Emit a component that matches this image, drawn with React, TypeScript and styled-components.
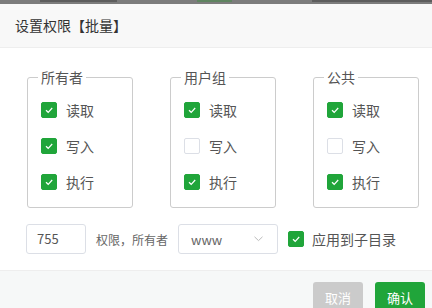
import styled, { createGlobalStyle } from 'styled-components';

const GlobalStyle = createGlobalStyle`
  html, body {
    margin: 0;
    padding: 0;
    background: #fff;
  }
  body {
    font-family: "Noto Sans CJK SC", "Noto Sans", sans-serif;
    color: #333;
  }
`;

type Perm = { label: string; checked: boolean };
type Group = { title: string; perms: Perm[] };

const groups: Group[] = [
  {
    title: '所有者',
    perms: [
      { label: '读取', checked: true },
      { label: '写入', checked: true },
      { label: '执行', checked: true },
    ],
  },
  {
    title: '用户组',
    perms: [
      { label: '读取', checked: true },
      { label: '写入', checked: false },
      { label: '执行', checked: true },
    ],
  },
  {
    title: '公共',
    perms: [
      { label: '读取', checked: true },
      { label: '写入', checked: false },
      { label: '执行', checked: true },
    ],
  },
];

const Check = ({ checked }: { checked: boolean }) => (
  <Box $checked={checked}>
    {checked && (
      <svg width="10" height="10" viewBox="0 0 10 10">
        <path d="M2 5.2 L4.2 7.3 L8.2 3" fill="none" stroke="#fff" strokeWidth="1.2" />
      </svg>
    )}
  </Box>
);

export default function App() {
  return (
    <>
      <GlobalStyle />
      <Backdrop>
        <BackText $w={110} />
        <BackText $w={50} $green />
        <BackText $w={170} />
      </Backdrop>
      <Dialog>
        <Header>设置权限【批量】</Header>
        <Body>
          <Groups>
            {groups.map((g) => (
              <Set key={g.title}>
                <Legend>{g.title}</Legend>
                {g.perms.map((p) => (
                  <Row key={p.label}>
                    <Check checked={p.checked} />
                    <Label>{p.label}</Label>
                  </Row>
                ))}
              </Set>
            ))}
          </Groups>
          <Controls>
            <Input>755</Input>
            <Caption>权限，所有者</Caption>
            <Select>
              <span>www</span>
              <svg width="9" height="6" viewBox="0 0 9 6">
                <path d="M0.5 0.8 L4.5 4.6 L8.5 0.8" fill="none" stroke="#bbb" strokeWidth="1" />
              </svg>
            </Select>
            <Check checked />
            <ApplyLabel>应用到子目录</ApplyLabel>
          </Controls>
        </Body>
        <Footer>
          <Button $variant="cancel">取消</Button>
          <Button $variant="ok">确认</Button>
        </Footer>
      </Dialog>
    </>
  );
}

const Backdrop = styled.div`
  height: 4px;
  background: #7c7c7c;
  overflow: hidden;
  display: flex;
  padding-left: 40px;
  gap: 80px;
`;

const BackText = styled.div<{ $w: number; $green?: boolean }>`
  width: ${(p) => p.$w}px;
  height: 2px;
  background: ${(p) => (p.$green ? '#4c8a4f' : '#4a4a4a')};
  opacity: 0.6;
`;

const Dialog = styled.div`
  background: #fff;
`;

const Header = styled.div`
  height: 43px;
  line-height: 43px;
  padding-left: 15px;
  background: #f8f8f8;
  border-bottom: 1px solid #eee;
  font-size: 14px;
  color: #333;
`;

const Body = styled.div`
  padding: 20px 0 16px 27px;
  border-bottom: 1px solid #eee;
`;

const Groups = styled.div`
  display: grid;
  grid-template-columns: repeat(3, 106px);
  column-gap: 37px;
`;

const Set = styled.fieldset`
  margin: 0;
  min-width: 0;
  box-sizing: border-box;
  width: 106px;
  border: 1px solid #ccc;
  border-radius: 3px;
  padding: 6px 0 7px 13px;
`;

const Legend = styled.legend`
  padding: 0 3px;
  margin-left: -3px;
  font-size: 14px;
  line-height: 18px;
  color: #555;
`;

const Row = styled.div`
  height: 36px;
  display: flex;
  align-items: center;
  gap: 9px;
`;

const Box = styled.span<{ $checked: boolean }>`
  box-sizing: border-box;
  width: 16px;
  height: 16px;
  flex: none;
  border-radius: 2px;
  display: flex;
  align-items: center;
  justify-content: center;
  background: ${(p) => (p.$checked ? '#20a53a' : '#fff')};
  border: 1px solid ${(p) => (p.$checked ? '#20a53a' : '#dcdfe6')};
`;

const Label = styled.span`
  font-size: 14px;
  color: #555;
`;

const Controls = styled.div`
  margin-top: 16px;
  margin-left: -1px;
  height: 30px;
  display: flex;
  align-items: center;
`;

const Input = styled.div`
  box-sizing: border-box;
  width: 60px;
  height: 30px;
  line-height: 28px;
  padding-left: 10px;
  border: 1px solid #dcdfe6;
  border-radius: 3px;
  font-size: 13px;
  color: #555;
`;

const Caption = styled.span`
  margin: 0 10px 0 10px;
  font-size: 12px;
  color: #666;
  white-space: nowrap;
`;

const Select = styled.div`
  box-sizing: border-box;
  width: 100px;
  height: 30px;
  padding: 0 14px 0 12px;
  margin-right: 10px;
  border: 1px solid #dcdfe6;
  border-radius: 3px;
  display: flex;
  align-items: center;
  justify-content: space-between;
  font-size: 13px;
  color: #666;
`;

const ApplyLabel = styled.span`
  margin-left: 8px;
  font-size: 14px;
  color: #555;
`;

const Footer = styled.div`
  height: 36px;
  padding: 11px 7px 0 0;
  background: #f6f8f8;
  display: flex;
  justify-content: flex-end;
  gap: 12px;
  overflow: hidden;
`;

const Button = styled.button<{ $variant: 'cancel' | 'ok' }>`
  width: 50px;
  height: 30px;
  border: none;
  border-radius: 3px;
  font-family: inherit;
  font-size: 13px;
  color: #fff;
  background: ${(p) => (p.$variant === 'ok' ? '#20a53a' : '#cbcbcb')};
`;
